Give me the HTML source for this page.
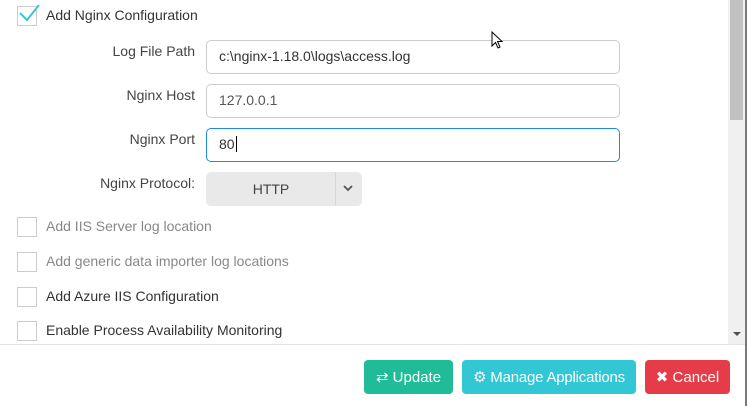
<!DOCTYPE html>
<html><head><style>
body{margin:0;width:747px;height:406px;overflow:hidden;background:#fff;font-family:"Liberation Sans",sans-serif;position:relative;font-size:14px;color:#333}
.a{position:absolute}
.cb{position:absolute;left:17px;width:18px;height:18px;border:1px solid #ccc;background:#fff}
.lbl{position:absolute;left:46px;font-size:14px}
.fl{position:absolute;right:552px;text-align:right;font-size:14px;color:#444}
.in{position:absolute;left:206px;border:1px solid #ccc;border-radius:5px;box-sizing:border-box;width:414px;padding-left:12px;line-height:31px;font-size:14px;color:#333}
.btn{position:absolute;top:360px;height:34px;border-radius:4px;color:#fff;font-size:15px;line-height:35px;text-align:center}
</style></head><body>
<div class="cb" style="top:6px"></div>
<svg class="a" style="left:18px;top:3px" width="22" height="20"><path d="M2 10 L9 17 L21 2" stroke="#3fc4d3" stroke-width="2" fill="none"/></svg>
<div class="lbl" style="top:7px;color:#333">Add Nginx Configuration</div>

<div class="fl" style="top:43px">Log File Path</div>
<div class="in" style="top:40px;height:34px">c:\nginx-1.18.0\logs\access.log</div>
<div class="fl" style="top:87px">Nginx Host</div>
<div class="in" style="top:84px;height:34px;color:#555">127.0.0.1</div>
<div class="fl" style="top:131px">Nginx Port</div>
<div class="in" style="top:128px;height:34px;border-color:#1e88e5">80<span style="border-left:1px solid #000;margin-left:1px"></span></div>
<div class="fl" style="top:175px">Nginx Protocol:</div>
<div class="a" style="left:206px;top:172px;width:156px;height:34px;background:#e9e9e9;border-radius:5px"></div>
<div class="a" style="left:206px;top:181px;width:130px;text-align:center;color:#444">HTTP</div>
<div class="a" style="left:335px;top:172px;width:1px;height:34px;background:#d8d8d8"></div>
<svg class="a" style="left:343px;top:185px" width="10" height="8"><path d="M1 1 L5 5 L9 1" stroke="#555" stroke-width="1.8" fill="none"/></svg>

<div class="cb" style="top:217px"></div><div class="lbl" style="top:218px;color:#888">Add IIS Server log location</div>
<div class="cb" style="top:252px"></div><div class="lbl" style="top:253px;color:#888">Add generic data importer log locations</div>
<div class="cb" style="top:287px"></div><div class="lbl" style="top:288px">Add Azure IIS Configuration</div>
<div class="cb" style="top:321px"></div><div class="lbl" style="top:322px">Enable Process Availability Monitoring</div>

<div class="a" style="left:0;top:344px;width:745px;height:1px;background:#e3e3e3"></div>
<div class="a" style="left:728px;top:0;width:17px;height:344px;background:#f0f0f0"></div>
<div class="a" style="left:730px;top:0;width:13px;height:120px;background:#c1c1c1"></div>
<svg class="a" style="left:733px;top:332px" width="8" height="5"><path d="M0 0 L8 0 L4 4Z" fill="#505050"/></svg>
<div class="a" style="left:745px;top:0;width:2px;height:406px;background:#7a7a7a"></div>

<svg class="a" style="left:491px;top:31px" width="14" height="20"><path d="M1 1 L1 15 L4.5 11.5 L7 17 L9 16 L6.5 10.5 L11 10.5 Z" fill="#fff" stroke="#000" stroke-width="1"/></svg>

<div class="btn" style="left:364px;width:89px;background:#1fbc97">⇄ Update</div>
<div class="btn" style="left:462px;width:174px;background:#32c7d4;letter-spacing:-0.2px">⚙ Manage Applications</div>
<div class="btn" style="left:645px;width:85px;background:#e63b48">✖ Cancel</div>
</body></html>
